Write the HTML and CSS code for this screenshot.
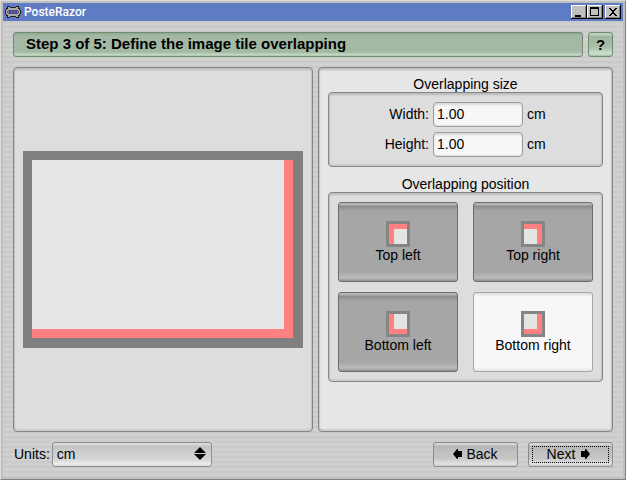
FILE: index.html
```
<!DOCTYPE html>
<html lang="en">
<head>
<meta charset="utf-8">
<title>PosteRazor</title>
<link rel="stylesheet" href="styles.css">
</head>
<body>
<div class="window">
  <header class="titlebar">
    <svg class="logo" width="16" height="14" viewBox="0 0 16 14" shape-rendering="crispEdges" aria-hidden="true">
      <path fill="#222" d="M2 1h3v1h6V1h3v2h1v2h1v4h-1v2h-1v2h-3v-1H5v1H2v-2H1V9H0V5h1V3h1z"/>
      <path fill="#aaa" d="M3 2h2v1h6V2h2v2h1v1h1v4h-1v1h-1v2h-2v-1H5v1H3v-2H2V9H1V5h1V4h1z"/>
      <path fill="#555" d="M3 5h10v1h1v2h-1v1H3V8H2V6h1z"/>
      <path fill="#889" d="M3 6h10v2H3z"/>
      <path fill="#33c" d="M4 6h2v2H4zM7 6h2v2H7zM10 6h2v2h-2z"/>
    </svg>
    <h1 class="title">PosteRazor</h1>
    <div class="window-buttons">
      <button class="window-button" aria-label="Minimize"><svg width="16" height="14" viewBox="0 0 16 14" shape-rendering="crispEdges"><path d="M4 10h6v2H4z"/></svg></button>
      <button class="window-button" aria-label="Maximize"><svg width="16" height="14" viewBox="0 0 16 14" shape-rendering="crispEdges"><path fill-rule="evenodd" d="M3 2h9v9H3zM4 4v6h7V4z"/></svg></button>
      <button class="window-button close" aria-label="Close"><svg width="16" height="14" viewBox="0 0 16 14" shape-rendering="crispEdges"><path d="M4 3h2v1h1v1h2V4h1V3h2v1h-1v1h-1v1H9v2h1v1h1v1h1v1h-2v-1H9V9H7v1H6v1H4v-1h1V9h1V8h1V6H6V5H5V4H4z"/></svg></button>
    </div>
  </header>
  <main class="content">
    <div class="heading-row">
      <h2 class="step">Step 3 of 5: Define the image tile overlapping</h2>
      <button class="help">?</button>
    </div>
    <div class="panels">
      <section class="panel preview-panel" aria-label="Preview">
        <div class="preview"><div class="tile"></div></div>
      </section>
      <section class="panel settings">
        <h3 class="group-title">Overlapping size</h3>
        <div class="group size-group">
          <label for="width">Width:</label><input id="width" value="1.00"><span>cm</span>
          <label for="height">Height:</label><input id="height" value="1.00"><span>cm</span>
        </div>
        <h3 class="group-title">Overlapping position</h3>
        <div class="group position-group">
          <button class="position"><span class="icon top left"></span>Top left</button>
          <button class="position"><span class="icon top right"></span>Top right</button>
          <button class="position"><span class="icon bottom left"></span>Bottom left</button>
          <button class="position selected" aria-pressed="true"><span class="icon bottom right"></span>Bottom right</button>
        </div>
      </section>
    </div>
    <footer class="footer">
      <label for="units">Units:</label>
      <div class="select-wrap">
        <select id="units"><option>cm</option></select>
        <svg class="updown" width="12" height="13" viewBox="0 0 12 13" aria-hidden="true"><path d="M6 0l6 6H0zM0 7h12l-6 6z"/></svg>
      </div>
      <button class="nav back"><svg width="9" height="10" viewBox="0 0 9 10"><path d="M0 5l4-5h1v2h4v6H5v2H4z"/></svg>Back</button>
      <button class="nav next"><span class="focus">Next<svg width="9" height="10" viewBox="0 0 9 10"><path d="M9 5L5 0H4v2H0v6h4v2h1z"/></svg></span></button>
    </footer>
  </main>
</div>
</body>
</html>
```
FILE: styles.css
```
* { box-sizing: border-box; }
body {
  margin: 0;
  font: 14px/16px "Liberation Sans", Arial, sans-serif;
  color: #000;
}
button, input, select { font: inherit; color: inherit; margin: 0; }
h1, h2, h3 { margin: 0; font: inherit; }
svg { flex: none; }
.window {
  display: flex;
  flex-direction: column;
  min-height: 100vh;
  border: 1px solid;
  border-color: #dcdcd8 #808080 #808080 #dcdcd8;
  padding: 2px;
  background: #c0c0c0;
}
.titlebar {
  display: flex;
  align-items: center;
  height: 18px;
  padding: 0 2px;
  background: #5f7bc4;
}
.title {
  flex: 1;
  margin-left: 3px;
  font: 500 12px/16px Roboto, sans-serif;
  color: #fff;
}
.window-buttons { display: flex; }
.window-button {
  width: 16px;
  height: 14px;
  padding: 0;
  border: 0;
  background: #c0c0c0;
  box-shadow: inset -1px -1px #000, inset 1px 1px #fff, inset -2px -2px #808080;
}
.window-button svg { display: block; }
.window-button.close { margin-left: 2px; }
.content {
  flex: 1;
  display: flex;
  flex-direction: column;
  gap: 10px;
  padding: 11px 10px 10px;
  background: repeating-linear-gradient(#cacaca 0 2px, #cecece 2px 3px, #d2d2d2 3px 4px, #cecece 4px 5px);
}
.heading-row { display: flex; gap: 5px; }
.step, .help {
  height: 25px;
  border: 1px solid #6f8b70;
  border-radius: 3px;
  background: linear-gradient(#8fa890 0, #a4b9a4 3px, #a4b9a4 19px, #c6dcc6 22px, #a4b9a4);
  font-weight: bold;
  font-size: 15px;
}
.step {
  flex: 1;
  padding: 0 12px;
  line-height: 22px;
}
.help {
  width: 25px;
  padding: 0;
  background: linear-gradient(#b8ccb8 0, #c0d4c0 2px, #9fb59f 3px, #a8bea8 14px, #cce2cc 21px, #a4b9a4);
}
.panels {
  flex: 1;
  display: grid;
  grid-template-columns: 300fr 295fr;
  gap: 5px;
}
.panel, .group {
  border: 1px solid #858585;
  border-radius: 4px;
  box-shadow: inset 0 2px 2px #bcbcbc, inset 0 -2px 1px #cccccc, inset 1px 0 1px #c8c8c8, inset -1px 0 1px #c8c8c8;
  background: #dddddd;
}
.preview-panel {
  display: flex;
  flex-direction: column;
  justify-content: center;
  padding: 0 9px;
}
.preview {
  aspect-ratio: 280 / 197;
  display: flex;
  border: solid #808080;
  border-width: 9px 10px 10px 9px;
}
.tile {
  flex: 1;
  border: solid #ff8080;
  border-width: 0 9px 9px 0;
  background: #e6e6e6;
}
.settings {
  padding: 8px 9px 0;
  background: #e6e6e6;
}
.group-title { text-align: center; }
.group { margin-bottom: 9px; }
.size-group {
  display: grid;
  grid-template-columns: 100px 90px 1fr;
  align-items: center;
  gap: 5px 4px;
  padding: 9px 0;
}
.size-group label { text-align: right; }
.size-group label, .size-group span { padding-bottom: 2px; }
.size-group input {
  width: 100%;
  height: 25px;
  padding: 0 3px 2px;
  border: 1px solid #9c9c9c;
  border-radius: 4px;
  background: #f7f7f7;
  box-shadow: inset 0 2px 2px #d8d8d8, inset 0 -1px 1px #dddddd;
}
.position-group {
  display: grid;
  grid-template-columns: 1fr 1fr;
  gap: 10px 15px;
  padding: 9px;
}
.position {
  display: flex;
  flex-direction: column;
  align-items: center;
  height: 80px;
  padding: 18px 0 0;
  border: 1px solid #6c6c6c;
  border-radius: 3px;
  background: linear-gradient(#b4b4b4 0 2px, #8a8a8a 3px, #a6a6a6 8px, #a6a6a6 69px, #bcbcbc 75px, #909090);
}
.position.selected {
  border-color: #a6a6a6;
  background: linear-gradient(#dedede, #f7f7f7 4px, #f7f7f7 74px, #e6e6e6);
}
.icon {
  width: 24px;
  height: 26px;
  border: 3px solid #858585;
  background: linear-gradient(#e2e5e2, #e2e5e2) no-repeat #ff8080;
  background-size: 13px 15px;
}
.icon.top.left { background-position: right bottom; }
.icon.top.right { background-position: left bottom; }
.icon.bottom.left { background-position: right top; }
.icon.bottom.right { background-position: left top; }
.footer {
  display: flex;
  align-items: center;
  gap: 2px;
}
.footer label { padding: 0 0 2px 1px; }
.select-wrap {
  position: relative;
  width: 160px;
  margin-right: auto;
}
.select-wrap select {
  appearance: none;
  display: block;
  width: 100%;
}
.select-wrap select, .nav {
  height: 25px;
  padding: 0 4px 2px;
  border: 1px solid #8e8e8e;
  border-radius: 3px;
  background: linear-gradient(#dadada 0 2px, #c0c0c0 3px, #cccccc 8px, #d4d4d4 16px, #eeeeee 21px, #d8d8d8);
}
.updown {
  position: absolute;
  right: 6px;
  top: 5px;
  pointer-events: none;
}
.nav {
  display: flex;
  align-items: center;
  justify-content: center;
  gap: 4px;
  width: 85px;
  background: linear-gradient(#d4d4d4 0 2px, #b4b4b4 3px, #c0c0c0 8px, #c4c4c4 15px, #e2e2e2 21px, #c8c8c8);
}
.nav.next { margin-left: 8px; padding: 0 3px; }
.focus {
  flex: 1;
  display: flex;
  align-items: center;
  justify-content: center;
  gap: 6px;
  height: 17px;
  padding: 0 4px 2px 0;
  border: 1px dotted #000;
}
```
